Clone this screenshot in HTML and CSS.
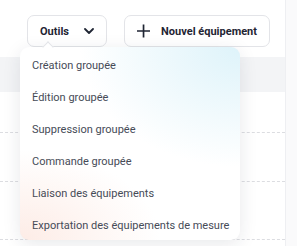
FILE: index.html
```html
<!DOCTYPE html>
<html lang="fr">
<head>
    <meta charset="UTF-8">
    <meta name="viewport" content="width=device-width, initial-scale=1.0">
    <title>Équipements</title>
    <link rel="stylesheet" href="styles.css">
</head>
<body>
    <div class="page">
        <div class="card">
            <!-- barre d'actions -->
            <div class="toolbar">
                <div class="tools">
                    <button class="btn">
                        Outils
                        <svg class="chevron" width="10" height="6" viewBox="0 0 10 6"><path d="M1 1l4 4 4-4" fill="none" stroke="#1f2533" stroke-width="1.8" stroke-linecap="round" stroke-linejoin="round"/></svg>
                    </button>
                    <!-- menu outils -->
                    <div class="menu">
                        <span class="caret"></span>
                        <ul>
                            <li>Création groupée</li>
                            <li>Édition groupée</li>
                            <li>Suppression groupée</li>
                            <li>Commande groupée</li>
                            <li>Liaison des équipements</li>
                            <li>Exportation des équipements de mesure</li>
                        </ul>
                    </div>
                </div>
                <button class="btn btn-add">
                    <svg width="14" height="14" viewBox="0 0 14 14"><path d="M7 0v14M0 7h14" stroke="#1f2533" stroke-width="1.8"/></svg>
                    Nouvel équipement
                </button>
            </div>
            <!-- tableau -->
            <div class="table">
                <div class="thead"></div>
                <div class="row r1"></div>
                <div class="row r2"></div>
                <div class="row r3"></div>
            </div>
        </div>
        <div class="side"></div>
    </div>
</body>
</html>
```
FILE: styles.css
```css
*{
    margin: 0;
    padding: 0;
    box-sizing: border-box;
}
body{
    width: 297px;
    height: 246px;
    overflow: hidden;
    background: #fff;
    font-family: Roboto, "Liberation Sans", sans-serif;
}
.page{
    display: flex;
    height: 246px;
}
.card{
    width: 286px;
    border-right: 1px solid #eeeff2;
    background: #fff;
}
.side{
    flex: 1;
    background: #fafafb;
}
.toolbar{
    display: flex;
    gap: 17px;
    padding: 15px 0 0 27px;
    height: 57px;
}
.tools{
    position: relative;
}
.btn{
    display: flex;
    align-items: center;
    height: 32px;
    border: 1px solid #e3e4e8;
    border-radius: 7px;
    background: #fff;
    font-family: Roboto, "Liberation Sans", sans-serif;
    font-weight: 700;
    font-size: 11px;
    color: #1f2533;
    padding: 0 12px;
    white-space: nowrap;
}
.tools .btn{
    width: 80px;
    gap: 15px;
}
.btn-add{
    width: 146px;
    gap: 11px;
    padding-left: 12px;
}
.table{
    width: 100%;
}
.thead{
    height: 35px;
    background: #f3f4f6;
}
.row{
    border-bottom: 1px dashed #dcdde1;
}
.r1{ height: 41px; }
.r2{ height: 49px; }
.r3{ height: 58px; }

.menu{
    position: absolute;
    top: 32px;
    left: -7px;
    width: 220px;
    height: 193px;
    border-radius: 9px;
    background:
        radial-gradient(ellipse 160px 120px at 100% 0%, #def3fa 0%, rgba(222,243,250,0) 100%),
        radial-gradient(ellipse 140px 90px at 0% 100%, #fdece6 0%, rgba(253,236,230,0) 100%),
        #fff;
    box-shadow: 0 4px 18px rgba(30,40,60,0.10);
    z-index: 2;
}
.caret{
    position: absolute;
    top: -4px;
    left: 24px;
    width: 8px;
    height: 8px;
    background: #fff;
    border-left: 1px solid #e3e4e8;
    border-top: 1px solid #e3e4e8;
    transform: rotate(45deg);
}
.menu ul{
    list-style: none;
    padding-top: 3px;
}
.menu li{
    height: 32px;
    line-height: 32px;
    padding-left: 12px;
    font-size: 11px;
    color: #464b57;
    white-space: nowrap;
}
```
